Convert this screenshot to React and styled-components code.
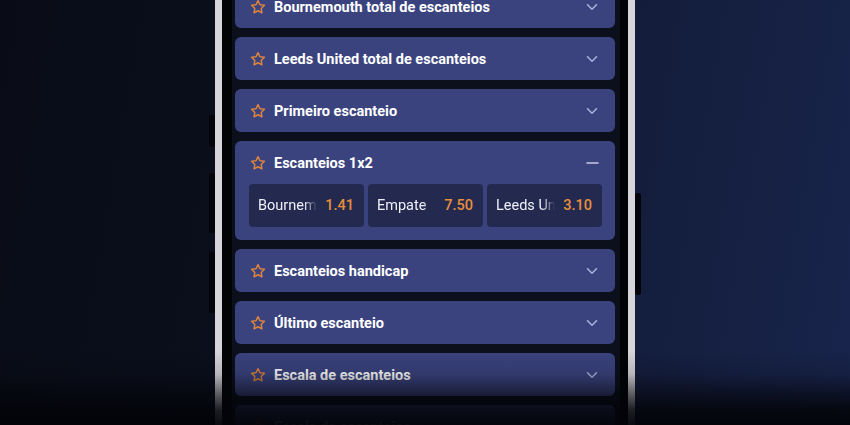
import React from "react";
import styled, { createGlobalStyle } from "styled-components";

const Global = createGlobalStyle`
  html, body { margin: 0; padding: 0; }
  body {
    width: 850px;
    height: 425px;
    overflow: hidden;
    font-family: Roboto, "Liberation Sans", sans-serif;
    -webkit-font-smoothing: antialiased;
  }
`;

const Page = styled.div`
  position: relative;
  width: 850px;
  height: 425px;
  overflow: hidden;
  display: flex;
  justify-content: center;
  background: linear-gradient(100deg, #090c17 0%, #0b0f1d 35%, #121a34 60%, #18244c 100%);
`;

const Phone = styled.div`
  position: relative;
  width: 388px;
  height: 480px;
  margin-top: -20px;
  border-left: 7px solid #d6d5da;
  border-right: 7px solid #d6d5da;
  background: #020305;
  padding: 0 8px 0 10px;
  box-sizing: content-box;
  display: flex;
`;

const SideButton = styled.span`
  position: absolute;
  width: 6px;
  background: #04050a;
  border-radius: 2px;
  top: ${(p) => p.$top}px;
  height: ${(p) => p.$h}px;
  ${(p) => (p.$right ? "right: -13px;" : "left: -13px;")}
`;

const Screen = styled.div`
  flex: 1;
  min-width: 0;
  background: #0c0f1c;
  padding: 5px 5px 0 3px;
  display: flex;
  flex-direction: column;
  gap: 9px;
`;

const Card = styled.div`
  background: #3a437e;
  border-radius: 6px;
  display: flex;
  flex-direction: column;
  padding-bottom: ${(p) => (p.$open ? 13 : 0)}px;
`;

const Header = styled.div`
  box-sizing: border-box;
  height: 43px;
  display: flex;
  align-items: center;
  padding: 1px 15px 0 15px;
  gap: 8px;
`;

const Title = styled.span`
  flex: 1;
  color: #ffffff;
  font-size: 14.5px;
  font-weight: 700;
  white-space: nowrap;
`;

const IconBox = styled.span`
  display: flex;
  align-items: center;
  justify-content: center;
  width: 16px;
  height: 16px;
`;

const OddsRow = styled.div`
  display: grid;
  grid-template-columns: repeat(3, minmax(0, 1fr));
  gap: 4px;
  padding: 0 13px 0 14px;
`;

const OddButton = styled.div`
  height: 43px;
  background: #242a4f;
  border-radius: 4px;
  display: flex;
  align-items: center;
  padding: 0 10px 0 9px;
  gap: 8px;
  min-width: 0;
`;

const OddLabel = styled.span`
  flex: 1;
  min-width: 0;
  overflow: hidden;
  white-space: nowrap;
  color: #eef0f8;
  font-size: 14.5px;
  font-weight: 400;
  -webkit-mask-image: linear-gradient(to right, #000 78%, transparent 100%);
  mask-image: linear-gradient(to right, #000 78%, transparent 100%);
`;

const OddValue = styled.span`
  color: #e58f3c;
  font-size: 14.5px;
  font-weight: 500;
`;

const BottomFade = styled.div`
  position: absolute;
  left: 0;
  right: 0;
  bottom: 0;
  height: 75px;
  pointer-events: none;
  background: linear-gradient(
    to bottom,
    rgba(3, 4, 9, 0) 0%,
    rgba(3, 4, 9, 0.15) 32%,
    rgba(3, 4, 9, 0.6) 60%,
    rgba(3, 4, 9, 0.88) 80%,
    rgba(3, 4, 9, 0.97) 100%
  );
`;

const Star = () => (
  <svg width="16" height="16" viewBox="0 0 24 24" fill="none" stroke="#de843c" strokeWidth="2.2" strokeLinejoin="round" strokeLinecap="round">
    <path d="M12 2.5l2.95 6.1 6.65.9-4.85 4.65 1.2 6.6L12 17.6l-5.95 3.15 1.2-6.6L2.4 9.5l6.65-.9z" />
  </svg>
);

const Chevron = () => (
  <svg width="12" height="8" viewBox="0 0 12 8" fill="none" stroke="#aab0dc" strokeWidth="1.6" strokeLinecap="round" strokeLinejoin="round">
    <path d="M1.5 1.8L6 6.2l4.5-4.4" />
  </svg>
);

const Minus = () => (
  <svg width="13" height="4" viewBox="0 0 13 4" fill="none" stroke="#c9cce2" strokeWidth="1.6" strokeLinecap="round">
    <path d="M1 2h11" />
  </svg>
);

const markets = [
  { title: "Bournemouth total de escanteios" },
  { title: "Leeds United total de escanteios" },
  { title: "Primeiro escanteio" },
  {
    title: "Escanteios 1x2",
    open: true,
    odds: [
      { label: "Bournemouth", value: "1.41" },
      { label: "Empate", value: "7.50" },
      { label: "Leeds United", value: "3.10" },
    ],
  },
  { title: "Escanteios handicap" },
  { title: "Último escanteio" },
  { title: "Escala de escanteios" },
  { title: "Escala de escanteios" },
];

export default function App() {
  return (
    <>
      <Global />
      <Page>
        <Phone>
          <SideButton $top={135} $h={32} />
          <SideButton $top={193} $h={60} />
          <SideButton $top={272} $h={61} />
          <SideButton $right $top={213} $h={102} />
          <Screen>
            {markets.map((m, i) => (
              <Card key={i} $open={m.open}>
                <Header>
                  <IconBox>
                    <Star />
                  </IconBox>
                  <Title>{m.title}</Title>
                  <IconBox>{m.open ? <Minus /> : <Chevron />}</IconBox>
                </Header>
                {m.odds && (
                  <OddsRow>
                    {m.odds.map((o) => (
                      <OddButton key={o.label}>
                        <OddLabel>{o.label}</OddLabel>
                        <OddValue>{o.value}</OddValue>
                      </OddButton>
                    ))}
                  </OddsRow>
                )}
              </Card>
            ))}
          </Screen>
        </Phone>
        <BottomFade />
      </Page>
    </>
  );
}
